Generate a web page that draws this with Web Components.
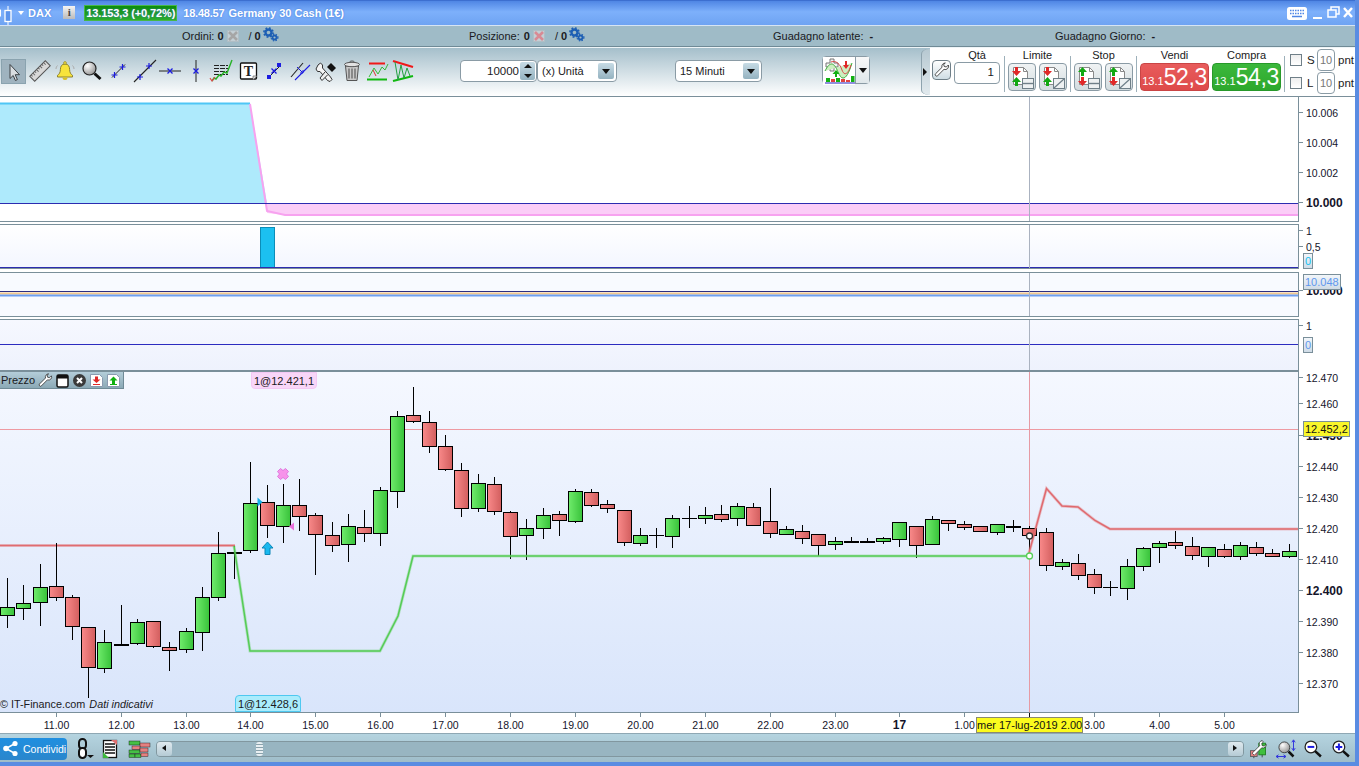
<!DOCTYPE html>
<html lang="it">
<head>
<meta charset="utf-8">
<title>DAX</title>
<style>
  html, body { margin: 0; padding: 0; height: 100%; overflow: hidden; background: #fff; }
  body { font: 11px "Liberation Sans", Arial, sans-serif; color: #1a1a22; }
</style>
</head>
<body>
<trade-window>
  <title-bar></title-bar>
  <info-bar>
    <info-stat label="Ordini:" count="0"></info-stat>
    <info-stat label="Posizione:" count="0" tone="red"></info-stat>
    <gain-stat label="Guadagno latente:"></gain-stat>
    <gain-stat label="Guadagno Giorno:"></gain-stat>
  </info-bar>
  <tool-bar></tool-bar>
  <chart-panel height="125" ticks='[["10.006",113],["10.004",143],["10.002",173],["10.000",203,1]]' plot="trend"></chart-panel>
  <chart-panel height="45" gap="2" ticks='[["1",231],["0,5",247]]' plot="signal">
    <price-tag slot="tags" y="261" tone="cyan">0</price-tag>
  </chart-panel>
  <chart-panel height="45" gap="3" ticks='[["10.000",291,1]]' plot="flat">
    <price-tag slot="tags" y="282" tone="blue">10.048</price-tag>
  </chart-panel>
  <chart-panel height="53" gap="2" ticks='[["1",326]]' plot="zero" open-bottom>
    <price-tag slot="tags" y="344.5" tone="blue">0</price-tag>
  </chart-panel>
  <chart-panel height="341" plot="price" ticks='[["12.470",378],["12.460",404],["12.450",436,1],["12.440",467],["12.430",498],["12.420",529],["12.410",560],["12.400",591,1],["12.390",622],["12.380",653],["12.370",684]]'>
    <price-tag slot="tags" y="429" tone="yellow">12.452,2</price-tag>
    <legend-bar slot="over">Prezzo</legend-bar>
    <order-flag slot="over" tone="pink" x="251" y="372">1@12.421,1</order-flag>
    <order-flag slot="over" tone="cyan" x="235" y="695">1@12.428,6</order-flag>
    <copy-note slot="over"></copy-note>
  </chart-panel>
  <time-axis></time-axis>
  <bottom-bar></bottom-bar>
</trade-window>

<script>
const GEARS = (c) => `<circle cx="5.5" cy="5.5" r="3" fill="none" stroke="${c}" stroke-width="2.4"/><circle cx="5.5" cy="5.5" r="4.6" fill="none" stroke="${c}" stroke-width="1.6" stroke-dasharray="1.8 1.8"/><circle cx="11.5" cy="10.5" r="2" fill="none" stroke="${c}" stroke-width="1.8"/><circle cx="11.5" cy="10.5" r="3.4" fill="none" stroke="${c}" stroke-width="1.2" stroke-dasharray="1.4 1.4"/>`;
const PLUS = (x, y) => `<path d="M${x - 3} ${y}h6M${x} ${y - 3}v6" stroke="#1c1ce0" stroke-width="1.2" fill="none"/>`;
const CROSS = (x, y) => `<path d="M${x - 2.5} ${y - 2.5}l5 5M${x + 2.5} ${y - 2.5}l-5 5" stroke="#1c1ce0" stroke-width="1.3" fill="none"/>`;
const LENS = (id) => `<defs><radialGradient id="${id}" cx=".35" cy=".3" r=".8"><stop offset="0" stop-color="#fff"/><stop offset="1" stop-color="#8d8d8d"/></radialGradient></defs>`;

// every icon is drawn on a 24x24 box, one unit is one pixel
const ICONS = {
  arrow: `<path d="M9 4.5v14l3.2-3 2.2 5 2-.9-2.2-4.9h4.3z" fill="#d9dde0" stroke="#3c4044"/>`,
  ruler: `<g transform="rotate(-45 12 12)"><rect x="1" y="8.500" width="22" height="7" fill="#d8d8d8" stroke="#555"/><path d="M3 8.500v2M5.500 8.500v3M8 8.500v2M10.500 8.500v3M13 8.500v2M15.500 8.500v3M18 8.500v2M20.500 8.500v3" stroke="#666"/></g>`,
  bell: `<path d="M12 5c-3.4 0-4.6 2.600-4.600 5.500 0 3.200-1.400 4.800-2.900 5.800v1.700h15v-1.700c-1.500-1-2.900-2.600-2.900-5.800C16.600 7.600 15.400 5 12 5z" fill="#f7e33c" stroke="#8c8230"/><circle cx="12" cy="4" r="1.400" fill="#f7e33c" stroke="#8c8230" stroke-width=".7"/><path d="M9.500 18.500a2.500 2.500 0 0 0 5 0z" fill="#d8c020"/><path d="M4.500 6.500c-1 1-1.500 2.200-1.500 3.500M19.500 6.500c1 1 1.500 2.200 1.500 3.500" stroke="#aaa" fill="none"/>`,
  zoom: `${LENS('zg')}<circle cx="9.500" cy="9.500" r="6.500" fill="url(#zg)" stroke="#222" stroke-width="1.200"/><path d="M14.500 14.500l6 5.500" stroke="#111" stroke-width="3"/>`,
  seg: `<path d="M6 18.500 19 5.500" stroke="#222"/>${PLUS(8.500, 16)}${PLUS(16.500, 8)}`,
  line: `<path d="M1 23 23 1" stroke="#222" stroke-width="1.100"/>${PLUS(7, 18)}${PLUS(16, 7)}`,
  hline: `<path d="M1 12h22" stroke="#222"/>${CROSS(12, 12)}`,
  vline: `<path d="M12 1v22" stroke="#222"/>${CROSS(12, 12)}`,
  fib: `<path d="M5 6.500h14M5 9.500h14M5 12.500h14M5 15.500h14" stroke="#222" stroke-dasharray="5 1"/><path d="M3 22l2-3 2 1 3-4 2 1 3-4 3 1 5-13" fill="none" stroke="#27b327" stroke-width="1.400"/><path d="M1 19l2 3 3-4" fill="none" stroke="#d84a4a" stroke-width="1.200"/>`,
  text: `<rect x="4.500" y="4" width="16" height="16" rx="1" fill="#fff" stroke="#111" stroke-width="1.300"/><text x="12.500" y="17" text-anchor="middle" font-family="Liberation Serif" font-weight="700" font-size="14" fill="#222">T</text><path d="M17 17h4l-4 4z" fill="#ddd" stroke="#555" stroke-width=".6"/>`,
  ends: `<path d="M8 18 19 7" stroke="#222"/><rect x="6" y="16" width="4" height="4" fill="#1c1ce0"/><rect x="16" y="4" width="4" height="4" fill="#1c1ce0"/>${CROSS(13, 12)}`,
  channel: `<path d="M2 18 14 4" stroke="#222" stroke-width="1.100"/><path d="M6 21 21 6" stroke="#1c1ce0" stroke-width="1.100"/><path d="M8 8l6 6M11 14h3v-3" stroke="#1c1ce0" fill="none"/>`,
  tools: `<path d="M4 6l2.500-2 2 2v3l8 9 1.500 2.500-2 2-2.500-1L6 12.500H3.500L2 10z" fill="#f5f5f5" stroke="#333"/><path d="M11 13l-5 6 2 2.500 6-6" fill="#eee" stroke="#333"/><path d="M13 8l4-4 5 5-4 4z" fill="#111"/>`,
  trash: `<path d="M5.500 7h13l-1.500 14.500h-10z" fill="#c9c9c9" stroke="#555"/><path d="M9 9.500v10M12 9.500v10M15 9.500v10" stroke="#666" stroke-width="1.300"/><ellipse cx="12" cy="5.500" rx="7.500" ry="2.200" fill="#e2e2e2" stroke="#555"/><path d="M9.500 3.500c0-2 5-2 5 0" fill="none" stroke="#555"/>`,
  range: `<path d="M3 4.500h16" stroke="#f01818" stroke-width="2"/><path d="M1 20.500h20" stroke="#10b810" stroke-width="2"/><path d="M3 18l5-9 4 6 4-7 3 3 3-6" fill="none" stroke="#38b838"/><path d="M7 11l3 6" stroke="#e03030"/>`,
  wedge: `<path d="M1 2l20 6" stroke="#f01818" stroke-width="2"/><path d="M1 22l20-5" stroke="#10b810" stroke-width="2"/><path d="M3 3l3 18 3-15 3 13 3-10 3 8" fill="none" stroke="#20a040"/>`,
  wrench: `<path d="M17 1.500a5 5 0 0 0-5 6.500L2.500 17.500a2.100 2.100 0 0 0 3 3L15 11a5 5 0 0 0 6.500-6.500l-3 3-3.200-.8-.8-3.200z" fill="#fff" stroke="#333" stroke-width="1.300"/>`,
  win: `<rect x="1" y="1" width="11" height="12" rx="1.500" fill="#fff" stroke="#111" stroke-width="1.500"/><rect x="1" y="1" width="11" height="3.500" fill="#111"/>`,
  shut: `<circle cx="6.500" cy="6.500" r="6.500" fill="#3a3a3a"/><path d="M4 4l5 5M9 4l-5 5" stroke="#fff" stroke-width="2"/>`,
  docdown: `<path d="M.5.500h9l3 3v9H.5z" fill="#fff" stroke="#8a9ab0"/><path d="M5 2.500h3v3h2.500L6.500 9l-4-3.500H5z" fill="#e02828"/><path d="M3 10.500h7" stroke="#e02828"/>`,
  docup: `<path d="M.5.500h9l3 3v9H.5z" fill="#fff" stroke="#8a9ab0"/><path d="M2.500 6.500l4-4 4 4z" fill="#12b012"/><rect x="5" y="6" width="3" height="4" fill="#12b012"/><path d="M3 10.500h7" stroke="#12b012"/>`,
  share: `<path d="M13 3.500 4 8.500l9 5" fill="none" stroke="#fff" stroke-width="1.500"/><circle cx="13" cy="3.500" r="2.600" fill="#fff"/><circle cx="4" cy="8.500" r="2.800" fill="#fff"/><circle cx="13" cy="13.500" r="2.600" fill="#fff"/>`,
  chain: `<rect x="7" y="2" width="7" height="10" rx="3.400" fill="none" stroke="#111" stroke-width="2"/><rect x="7" y="11" width="7" height="10" rx="3.400" fill="#fff" stroke="#111" stroke-width="2"/><path d="M15 18h7l-3.500 3z" fill="#111"/>`,
  sheet: `<rect x="5.500" y="3.500" width="13" height="17" fill="#fff" stroke="#111" stroke-width="1.300"/><path d="M7 7h10M7 10h10M7 13h10M7 16h10" stroke="#111" stroke-width="1.300"/><path d="M13 3h6v5z" fill="#e07070"/><path d="M5 21v-6l6 6z" fill="#3cb83c"/>`,
  blocks: `<g stroke="#111" stroke-width=".4"><rect x="3" y="4" width="11" height="4" fill="#45c045"/><rect x="14" y="6" width="10" height="4" fill="#e58080"/><rect x="6" y="9" width="8" height="3.500" fill="#e58080"/><rect x="3" y="13" width="11" height="3.500" fill="#45c045"/><rect x="14" y="11" width="8" height="4" fill="#e58080"/><rect x="3" y="17" width="6" height="3.500" fill="#45c045"/><rect x="9" y="17" width="6" height="3.500" fill="#45c045"/><rect x="15" y="16" width="7" height="3.500" fill="#e58080"/></g>`,
  setup: `<path d="M7 15v8M17 2v20" stroke="#333"/><rect x="3" y="14" width="8" height="7" fill="#e58080" stroke="#555"/><rect x="13" y="5" width="8" height="14" fill="#3fc03f" stroke="#1b7a1b"/><path d="M17 2a4 4 0 0 0-3 6L5 17l2.500 2.500 9-9a4 4 0 0 0 5.500-4l-2.500 2-2.500-.5-.5-2.500 2-2z" fill="#fff" stroke="#222" stroke-width=".8"/>`,
  fit: `${LENS('fg')}<circle cx="10" cy="10" r="6.500" fill="url(#fg)" stroke="#333"/><path d="M15 15l6 6" stroke="#111" stroke-width="3"/><path d="M21 2v11M19 4l2-3 2 3M19 11l2 3 2-3" stroke="#1c1ce0" fill="none"/><path d="M1 21h10M3 19l-3 2 3 2M9 19l3 2-3 2" stroke="#1c1ce0" fill="none"/>`,
  minus: `<circle cx="9.500" cy="9.500" r="7" fill="#fff" stroke="#222" stroke-width="1.500"/><path d="M5.500 9.500h8" stroke="#1c1ce0" stroke-width="2.400"/><path d="M14.500 14.500l7 6.500" stroke="#111" stroke-width="3"/>`,
  plus: `<circle cx="9.500" cy="9.500" r="7" fill="#fff" stroke="#222" stroke-width="1.500"/><path d="M5.500 9.500h8M9.500 5.500v8" stroke="#1c1ce0" stroke-width="2.400"/><path d="M14.500 14.500l7 6.500" stroke="#111" stroke-width="3"/>`,
  keyboard: `<rect x="0" y="4" width="20" height="13" rx="2.500" fill="#fff"/><path d="M3 7.500h14M3 10.500h14" stroke="#4f86e6" stroke-width="1.500" stroke-dasharray="1.500 1"/><path d="M5 13.500h10" stroke="#4f86e6" stroke-width="1.500"/>`,
  candle: `<rect x="-4" y="4.500" width="5" height="7" fill="#fff"/><path d="M8 1v19" stroke="#fff"/><rect x="5" y="5.500" width="6" height="11" fill="#5d94ec" stroke="#fff" stroke-width="1.300"/>`,
  chart: `<rect x="0" y="0" width="32" height="28" fill="#fff"/><path d="M7 2v4H3v4h4v4h4v-4h4V6h-4V2z" fill="#f2f2f2" stroke="#777"/><path d="M2 14c5-10 9-9 13 1s9 8 14-9" fill="#cdeec0" stroke="#3cb03c"/><path d="M8 5c5-2 9 2 11 8s6 5 9-5" fill="none" stroke="#d84a4a"/><path d="M12 20v-3H9.500l3.500-4 3.500 4H14v3z" fill="#12b012"/><path d="M24 4v4h2l-3 4-3-4h2V4z" fill="#e02828"/><g fill="#12b012"><rect x="3" y="21" width="4" height="4"/><rect x="13" y="21" width="4" height="4"/><rect x="28" y="19" width="3.500" height="6"/></g><g fill="#e04040"><rect x="8" y="22" width="4" height="3"/><rect x="18" y="22" width="4" height="3"/><rect x="23" y="23" width="4" height="2"/></g><path d="M2 26h30" stroke="#2222c0"/>`
};

class TrIcon extends HTMLElement {
  connectedCallback() {
    const size = this.getAttribute('size') || 24;
    const box = this.getAttribute('box') || 24;
    this.attachShadow({ mode: 'open' });
    this.shadowRoot.innerHTML = `
      <style>:host { display: block; flex: none; width: ${size}px; height: ${size}px; } svg { display: block; overflow: visible; }</style>
      <svg width="${size}" height="${size}" viewBox="0 0 ${box} ${box}">${ICONS[this.getAttribute('name')]}</svg>`;
  }
}
customElements.define('tr-icon', TrIcon);

class TradeWindow extends HTMLElement {
  constructor() {
    super();
    this.attachShadow({ mode: 'open' });
    this.shadowRoot.innerHTML = `
      <style>
        :host { display: block; width: 1359px; height: 766px; box-sizing: border-box; background: #fff;
                border-right: 4px solid #5a8ce2; border-bottom: 4px solid #5a8ce2; overflow: hidden; }
      </style>
      <slot></slot>`;
  }
}
customElements.define('trade-window', TradeWindow);

class TitleBar extends HTMLElement {
  constructor() {
    super();
    this.attachShadow({ mode: 'open' });
    this.shadowRoot.innerHTML = `
      <style>
        :host { display: flex; align-items: center; height: 25px; box-sizing: border-box; padding: 0 2px 1px 0;
                border-top: 1px solid #3c6fd0;
                background: linear-gradient(#4f86e4, #7db0fb 45%, #6ea3f2);
                color: #fff; font-weight: 700; font-size: 11px; white-space: nowrap; text-shadow: 0 0 2px #3f78d8; }
        .drop { width: 0; height: 0; border: 3.5px solid transparent; border-top: 4px solid #fff; border-bottom: 0; margin: 1px 4px 0 2px; }
        .info { width: 12px; height: 13px; margin-left: 12px; background: linear-gradient(#f4f4f4, #bbb); color: #444;
                font: 700 11px/13px "Liberation Serif", serif; text-align: center; text-shadow: none; }
        .quote { margin-left: 9px; height: 16px; width: 93px; flex: none; box-sizing: border-box; line-height: 15px; text-align: center;
                 background: linear-gradient(#0c8c0c, #2cad2c); border: 1px solid #46b846; letter-spacing: -.1px; }
        .time { margin-left: 6px; letter-spacing: -.2px; }
        .name { margin-left: 4px; }
        .space { flex: 1; }
        .cap { margin-right: 6px; }
        .ctl { display: block; overflow: visible; flex: none; }
      </style>
      <tr-icon name="candle" size="16" box="16"></tr-icon>
      <span class="drop"></span><span>DAX</span>
      <span class="info">i</span>
      <span class="quote">13.153,3 (+0,72%)</span>
      <span class="time">18.48.57</span>
      <span class="name">Germany 30 Cash (1€)</span>
      <span class="space"></span>
      <tr-icon class="cap" name="keyboard" size="20" box="20"></tr-icon>
      <svg class="ctl" width="40" height="14" viewBox="0 0 40 14">
        <path d="M0 12h9" stroke="#fff" stroke-width="2"/>
        <path d="M15 4h8v7h-8zM18 4V1h8v7h-3" fill="none" stroke="#fff" stroke-width="1.500"/>
        <path d="M31 2l8 9M39 2l-8 9" stroke="#fff" stroke-width="2.400"/>
      </svg>`;
  }
}
customElements.define('title-bar', TitleBar);

class InfoBar extends HTMLElement {
  constructor() {
    super();
    this.attachShadow({ mode: 'open' });
    this.shadowRoot.innerHTML = `
      <style>
        :host { display: grid; grid-template-columns: 287px 304px 282px 1fr; align-items: center; height: 22px;
                box-sizing: border-box; padding-left: 182px; background: #9fbbc7;
                border-top: 1px solid #d6e4f4; border-bottom: 1px solid #6f8a96; }
      </style>
      <slot></slot>`;
  }
}
customElements.define('info-bar', InfoBar);

class InfoStat extends HTMLElement {
  connectedCallback() {
    const n = this.getAttribute('count');
    const red = this.getAttribute('tone') === 'red';
    this.attachShadow({ mode: 'open' });
    this.shadowRoot.innerHTML = `
      <style>
        :host { display: flex; align-items: center; height: 18px; white-space: nowrap; }
        b { font-weight: 700; }
        .n { margin-left: ${red ? 4 : 3}px; }
        .x { margin-left: 3px; display: block; }
        .s { margin-left: 10px; }
        .m { margin-left: 3px; }
        svg.g { display: block; margin: -5px 0 0 2px; overflow: visible; }
      </style>
      <span>${this.getAttribute('label')}</span><b class="n">${n}</b>
      <svg class="x" width="12" height="12" viewBox="0 0 12 12">
        <rect x=".5" y=".5" width="11" height="11" fill="#c3cfd5" stroke="#b0bec5"/>
        <path d="M2 2l8 8M10 2l-8 8" stroke="${red ? '#d88a94' : '#a6a6a6'}" stroke-width="2.600"/>
      </svg>
      <span class="s">/</span><b class="m">${n}</b>
      <svg class="g" width="15" height="14" viewBox="0 0 15 14">${GEARS('#1d5fb4')}</svg>`;
  }
}
customElements.define('info-stat', InfoStat);

class GainStat extends HTMLElement {
  connectedCallback() {
    this.attachShadow({ mode: 'open' });
    this.shadowRoot.innerHTML = `
      <style>:host { display: block; white-space: nowrap; } b { margin-left: 3px; }</style>
      ${this.getAttribute('label')} <b>-</b>`;
  }
}
customElements.define('gain-stat', GainStat);

class ComboBox extends HTMLElement {
  constructor() {
    super();
    this.attachShadow({ mode: 'open' });
    this.shadowRoot.innerHTML = `
      <style>
        :host { display: flex; align-items: center; box-sizing: border-box; height: 22px; padding: 0 2px 0 4px; flex: none;
                background: #fff; border: 1px solid #8a9ba5; border-radius: 4px; }
        .t { flex: 1; font-size: 11px; }
        .b { width: 16px; height: 16px; border-radius: 2px; background: linear-gradient(#c7dbe5, #94b2c0); position: relative; }
        .b::after { content: ""; position: absolute; left: 4px; top: 6px; border: 4px solid transparent; border-top: 5px solid #111; border-bottom: 0; }
      </style>
      <span class="t"><slot></slot></span><span class="b"></span>`;
  }
}
customElements.define('combo-box', ComboBox);

class SpinBox extends HTMLElement {
  constructor() {
    super();
    this.attachShadow({ mode: 'open' });
    this.shadowRoot.innerHTML = `
      <style>
        :host { display: flex; align-items: center; box-sizing: border-box; height: 22px; width: 77px; flex: none; padding-right: 1px;
                background: #fff; border: 1px solid #8a9ba5; border-radius: 4px; }
        .t { flex: 1; text-align: right; font-size: 11.500px; padding-right: 1px; }
        .s { width: 15px; height: 18px; background: linear-gradient(#c7dbe5, #94b2c0); position: relative; border-radius: 2px; }
        .s::before, .s::after { content: ""; position: absolute; left: 3.500px; border: 4px solid transparent; }
        .s::before { top: 2px; border-bottom: 4px solid #111; border-top: 0; }
        .s::after { bottom: 2px; border-top: 4px solid #111; border-bottom: 0; }
      </style>
      <span class="t"><slot></slot></span><span class="s"></span>`;
  }
}
customElements.define('spin-box', SpinBox);

class ToolBar extends HTMLElement {
  constructor() {
    super();
    const tools = [['ruler', 2], ['bell', 1], ['zoom', 3], ['seg', 2], ['line', 3], ['hline', 1], ['vline', 2], ['fib', 1], ['text', 3], ['ends', 1], ['channel', 4], ['tools', 1], ['trash', 2], ['range', 2], ['wedge', 2]];
    this.attachShadow({ mode: 'open' });
    this.shadowRoot.innerHTML = `
      <style>
        :host { display: flex; height: 50px; box-sizing: border-box; position: relative;
                border-top: 1px solid #eef4f7; border-bottom: 1px solid #7a8f9a;
                background: linear-gradient(#a5bfcb, #fff); }
        .left { display: flex; align-items: center; flex: none; width: 921px; padding: 0 0 2px 1px; box-sizing: border-box; }
        .sel { width: 25px; height: 25px; box-sizing: border-box; flex: none; background: #9fb3bf; border: 1px solid #8aa3af; }
        .sel tr-icon { margin: 0 0 0 -1px; }
        .tools { display: flex; align-items: center; flex: none; }
        .chart { display: flex; flex: none; margin: -3px 0 0 60px; height: 28px; box-sizing: border-box; background: #fff;
                 border: 1px solid #8a9ba5; border-radius: 4px; }
        .chart span { width: 13px; border-left: 1px solid #8a9ba5; position: relative; background: linear-gradient(#f8f8f8, #dfe7ea); }
        .chart span::after { content: ""; position: absolute; left: 2.500px; top: 11px; border: 4px solid transparent; border-top: 5px solid #111; border-bottom: 0; }
        .handle { width: 9px; flex: none; box-sizing: border-box; position: relative; margin: 1px 0;
                  background: linear-gradient(#b6c8d1, #e2eaee); border-left: 1px solid #8ea3ae;
                  border-radius: 8px 0 0 8px / 5px 0 0 5px; }
        .handle::after { content: ""; position: absolute; left: 1px; top: 19px; border: 4px solid transparent; border-left: 4px solid #111; border-right: 0; }
        .right { display: flex; flex: 1; background: #fff; box-sizing: border-box; padding-left: 2px; }
        .wrench { width: 19px; height: 20px; box-sizing: border-box; margin: 12px 3px 0 0; flex: none; border: 1px solid #6f7f88; border-radius: 4px;
                  background: linear-gradient(#fff, #cfdde4); }
        .wrench tr-icon { margin: 1px; }
        .sep { width: 1px; height: 36px; background: #9db0ba; margin: 8px 3px 0; flex: none; }
        .sep.first { margin-left: 4px; }
        .qty { width: 46px; height: 22px; box-sizing: border-box; margin-top: -1px; text-align: right; padding: 3px 5px 0 0; font-size: 11.500px; border: 1px solid #8a9ba5; border-radius: 4px; background: #fff; }
        .pair { display: flex; gap: 3px; }
        .safe { display: grid; grid-template-columns: 13px 14px 18px auto; align-items: center; margin-left: 2px; row-gap: 1px; align-content: start; padding-top: 1px; font-size: 11.500px; }
        .safe i { display: block; width: 12px; height: 12px; box-sizing: border-box; border: 1px solid #6f7f88; background: linear-gradient(#eee, #fff); }
        .safe u { display: block; text-decoration: none; width: 18px; height: 22px; line-height: 20px; box-sizing: border-box; text-align: center; font-size: 11px; color: #777; border: 1px solid #8a9ba5; border-radius: 4px; }
        .safe span { padding-left: 3px; }
        .safe span.k { padding-left: 4px; }
      </style>
      <div class="left">
        <div class="sel"><tr-icon name="arrow"></tr-icon></div>
        <div class="tools">${tools.map(t => `<tr-icon name="${t[0]}" style="margin-left:${t[1]}px"></tr-icon>`).join('')}</div>
        <spin-box style="margin-left:44px">10000</spin-box>
        <combo-box style="width:80px">(x) Unità</combo-box>
        <combo-box style="width:87px;margin-left:58px">15 Minuti</combo-box>
        <div class="chart"><tr-icon name="chart" size="32" box="32"></tr-icon><span></span></div>
      </div>
      <span class="handle"></span>
      <div class="right">
        <div class="wrench"><tr-icon name="wrench" size="16" box="24"></tr-icon></div>
        <trade-group label="Qtà"><div class="qty">1</div></trade-group>
        <span class="sep first"></span>
        <trade-group label="Limite"><div class="pair"><order-button first="down" kind="lines"></order-button><order-button first="down" kind="slash"></order-button></div></trade-group>
        <span class="sep"></span>
        <trade-group label="Stop"><div class="pair"><order-button first="up" kind="lines"></order-button><order-button first="up" kind="slash"></order-button></div></trade-group>
        <span class="sep"></span>
        <trade-group label="Vendi"><quote-button tone="red" head="13.1">52,3</quote-button></trade-group>
        <trade-group label="Compra" style="margin-left:3px"><quote-button tone="green" head="13.1">54,3</quote-button></trade-group>
        <span class="sep"></span>
        <div class="safe">
          <i></i><span class="k">S</span><u>10</u><span>pnt</span>
          <i></i><span class="k">L</span><u>10</u><span>pnt</span>
        </div>
      </div>`;
  }
}
customElements.define('tool-bar', ToolBar);

class TradeGroup extends HTMLElement {
  connectedCallback() {
    this.attachShadow({ mode: 'open' });
    this.shadowRoot.innerHTML = `
      <style>
        :host { display: flex; flex-direction: column; align-items: center; flex: none; }
        .l { height: 15px; line-height: 14px; font-size: 11px; }
      </style>
      <div class="l">${this.getAttribute('label')}</div><slot></slot>`;
  }
}
customElements.define('trade-group', TradeGroup);

class OrderButton extends HTMLElement {
  connectedCallback() {
    const downFirst = this.getAttribute('first') === 'down';
    const down = (y) => `<path d="M6 ${y}h3v4h3l-4.500 5-4.500-5h3z" fill="#e02828"/>`;
    const up = (y) => `<path d="M7.500 ${y}l4.500 5H9v4H6v-4H3z" fill="#12a812"/>`;
    const sub = this.getAttribute('kind') === 'lines'
      ? `<rect x="13.500" y="14.500" width="11" height="10" fill="#eef1f2" stroke="#6f7f88"/><path d="M13.500 19.500h11" stroke="#6f7f88" stroke-width="1.400"/>`
      : `<rect x="13.500" y="14.500" width="11" height="10" fill="#eef1f2" stroke="#6f7f88"/><path d="M14 24 24 15" stroke="#6f7f88" stroke-width="1.200"/>`;
    this.attachShadow({ mode: 'open' });
    this.shadowRoot.innerHTML = `
      <style>
        :host { display: block; width: 28px; height: 28px; box-sizing: border-box; border: 1px solid #8a9ba5; border-radius: 4px;
                background: linear-gradient(#f0f3f4, #d3dcdf); }
        svg { display: block; }
      </style>
      <svg width="26" height="26" viewBox="0 0 26 26">
        <path d="M4.500 3.500h10l4 4v13h-14z" fill="#fff" stroke="#8a8a8a"/><path d="M14.500 3.500v4h4" fill="none" stroke="#8a8a8a"/>
        ${downFirst ? down(3) + up(13) : up(3) + down(13)}
        ${sub}
      </svg>`;
  }
}
customElements.define('order-button', OrderButton);

class QuoteButton extends HTMLElement {
  connectedCallback() {
    const red = this.getAttribute('tone') === 'red';
    this.attachShadow({ mode: 'open' });
    this.shadowRoot.innerHTML = `
      <style>
        :host { display: flex; align-items: baseline; justify-content: center; width: 69px; height: 28px; box-sizing: border-box;
                border-radius: 4px; color: #fff; line-height: 26px; white-space: nowrap;
                border: 1px solid ${red ? '#c94545' : '#27992a'};
                background: ${red ? 'linear-gradient(#e85c5c, #de4a4a)' : 'linear-gradient(#3cb83c, #2da82d)'}; }
        small { font-size: 11px; }
        span { font-size: 23px; letter-spacing: -.4px; }
      </style>
      <small>${this.getAttribute('head')}</small><span><slot></slot></span>`;
  }
}
customElements.define('quote-button', QuoteButton);

const CANDLES = [
  [7,578,627,607,615,'g'],[23,585,619,603,608,'g'],[40,564,625,587,602,'g'],[56,543,600,586,597,'r'],[72,595,639,597,626,'r'],
  [88,627,697,627,667,'r'],[104,630,672,642,668,'g'],[121,605,645,644,644,'k'],[137,619,644,622,643,'g'],[153,621,647,621,646,'r'],
  [169,642,670,647,650,'r'],[186,628,652,631,649,'g'],[202,587,650,597,632,'g'],[218,532,600,553,597,'g'],[234,546,578,552,552,'k'],
  [250,462,552,503,550,'g'],[267,485,537,502,525,'r'],[283,484,542,505,526,'g'],[299,479,530,505,516,'r'],[315,513,574,515,534,'r'],
  [332,522,551,535,545,'r'],[348,514,561,526,544,'g'],[364,510,541,527,533,'r'],[380,487,545,490,533,'g'],[397,411,507,416,491,'g'],
  [413,387,422,415,421,'r'],[429,411,452,422,446,'r'],[445,435,470,446,469,'r'],[461,463,516,470,508,'r'],[478,474,511,483,508,'g'],
  [494,477,514,484,511,'r'],[510,511,558,512,536,'r'],[526,519,559,528,535,'g'],[543,508,538,515,528,'g'],[559,511,535,514,520,'r'],
  [575,489,522,491,521,'g'],[591,489,506,492,505,'r'],[607,500,512,504,508,'r'],[624,510,545,510,542,'r'],[640,528,545,535,543,'g'],
  [656,528,547,535,535,'n'],[672,515,547,518,536,'g'],[689,506,527,518,518,'n'],[705,507,523,515,518,'g'],[721,505,521,514,519,'r'],
  [737,503,525,506,518,'g'],[753,503,525,507,525,'r'],[770,488,537,521,533,'r'],[786,526,534,529,534,'g'],[802,525,543,531,538,'r'],
  [818,534,555,534,545,'r'],[835,537,549,541,544,'g'],[851,537,541,541,541,'k'],[867,538,541,541,541,'k'],[883,537,543,538,541,'g'],
  [899,522,546,522,539,'g'],[916,526,557,526,545,'r'],[932,516,544,519,544,'g'],[948,520,530,520,523,'r'],[964,521,529,524,527,'r'],
  [980,526,531,526,531,'r'],[997,524,534,524,532,'g'],[1013,520,531,526,526,'k'],[1029,526,553,528,535,'r'],[1046,528,570,532,565,'r'],
  [1062,559,569,562,566,'g'],[1078,554,579,563,575,'r'],[1094,569,593,574,587,'r'],[1110,581,595,587,587,'n'],[1127,559,599,566,588,'g'],
  [1143,547,570,548,566,'g'],[1159,541,562,543,547,'g'],[1175,531,548,542,545,'r'],[1192,537,559,546,555,'r'],[1208,547,566,547,556,'g'],
  [1224,544,557,549,556,'r'],[1240,542,559,545,556,'g'],[1256,542,555,547,553,'r'],[1272,549,556,553,556,'r'],[1289,544,557,551,556,'g']
];

function candlesSvg() {
  return CANDLES.map(([x, wt, wb, bt, bb, c]) => {
    const wick = `<path d="M${x + .5} ${wt}V${wb + 1}" stroke="#000"/>`;
    if (c === 'k') return wick + `<rect x="${x - 7}" y="${bt}" width="15" height="2" fill="#000"/>`;
    if (c === 'n') return wick + `<rect x="${x - 7}" y="${bt}" width="15" height="1" fill="#000"/>`;
    return wick + `<rect x="${x - 6.5}" y="${bt + .5}" width="14" height="${bb - bt}" fill="url(#${c})" stroke="#000"/>`;
  }).join('');
}

const VLINE = (top, bot, c) => `<path d="M1029.500 ${top}V${bot}" stroke="${c}" shape-rendering="crispEdges"/>`;
const HALO = (d, c) => `<path d="${d}" stroke="${c}" stroke-width="3" opacity=".35" fill="none"/><path d="${d}" stroke="${c}" stroke-width="1.500" fill="none"/>`;

// each plot uses the page's y values through its viewBox
const PLOTS = {
  trend: () => `
    <path d="M0 103H250L267 203H0z" fill="#aeeafc"/>
    <path d="M267 203h1031v12H285l-18-2z" fill="#fbcdf7"/>
    <path d="M0 103.500H250" stroke="#4fc6f5" stroke-width="2" fill="none"/>
    <path d="M250 104 267 211 285 215H1298" stroke="#f7a2ef" stroke-width="2" fill="none"/>
    <path d="M0 203.500H1298" stroke="#2c2cb0" shape-rendering="crispEdges"/>
    ${VLINE(97, 222, '#aab2c0')}`,
  signal: () => `
    <rect x="260.500" y="227.500" width="14" height="40" fill="#1cc0f0" stroke="#0c8db8"/>
    <path d="M0 267.500H1298" stroke="#2c2cb0" shape-rendering="crispEdges"/>
    ${VLINE(225, 268, '#aab2c0')}`,
  flat: () => `
    <path d="M0 291.500H1298" stroke="#2c2c80" shape-rendering="crispEdges"/>
    <path d="M0 293.500H1298" stroke="#f3c88f" stroke-width="2"/>
    <path d="M0 295.500H1298" stroke="#6f9ff0" stroke-width="2"/>
    ${VLINE(273, 317, '#aab2c0')}`,
  zero: () => `
    <path d="M0 344.500H1298" stroke="#2c2cc0" shape-rendering="crispEdges"/>
    ${VLINE(320, 371, '#aab2c0')}`,
  price: () => `
    <defs>
      <linearGradient id="g"><stop offset="0" stop-color="#70ec6c"/><stop offset="1" stop-color="#38c23a"/></linearGradient>
      <linearGradient id="r"><stop offset="0" stop-color="#f98a8a"/><stop offset="1" stop-color="#d25e5e"/></linearGradient>
    </defs>
    <path d="M0 429.500H1298" stroke="#ee9aa2" shape-rendering="crispEdges"/>
    ${VLINE(372, 712, '#e69aa4')}
    ${HALO('M0 545.500H235', '#e06c70')}
    <g shape-rendering="crispEdges">${candlesSvg()}</g>
    ${HALO('M234 546 250 651H380L398 616 413 556H1029', '#55cc55')}
    ${HALO('M1029 553 1046.500 488.500 1062 506 1078 507 1095 520.500 1110 529H1298', '#e0696e')}
    <circle cx="1029.500" cy="536" r="3" fill="#fff" stroke="#333" stroke-width="1.300"/>
    <circle cx="1029.500" cy="556" r="3" fill="#fff" stroke="#58cf58" stroke-width="1.300"/>
    <path d="M280.500 468.500l2.500 2 2.500-2 3 3-2 2.500 2 2.500-3 3-2.500-2-2.500 2-3-3 2-2.500-2-2.500z" fill="#f793ea" stroke="#d868d8" stroke-width=".8"/>
    <path d="M257.500 497.500l5 4.500-5 4.500z" fill="#12b2ea"/>
    <path d="M294 522.500l-5 4 5 4z" fill="#ea70dc"/>
    <path d="M267.500 542l5.500 6h-3v6.500h-5V548h-3z" fill="#19b8ef" stroke="#0a86b8"/>`
};

class ChartPanel extends HTMLElement {
  connectedCallback() {
    const h = +this.getAttribute('height');
    const gap = +(this.getAttribute('gap') || 0);
    const kind = this.getAttribute('plot');
    const top = { trend: 97, signal: 224, flat: 272, zero: 319, price: 372 }[kind];
    const ticks = JSON.parse(this.getAttribute('ticks'));
    const bg = {
      trend: 'linear-gradient(#fff, #fff)', signal: 'linear-gradient(#fff, #f3f6ff)', flat: '#f8faff',
      zero: 'linear-gradient(#f6f8ff, #eef2fd)', price: 'linear-gradient(#f5f8ff, #d9e5fb)'
    }[kind];
    const axis = ticks.map(([t, y, b]) =>
      `<span class="tick" style="top:${Math.round(y - top) - 1}px"></span><span class="lab${b ? ' b' : ''}" style="top:${y - top - 8}px">${t}</span>`).join('');
    const bottom = this.hasAttribute('open-bottom') ? '2px solid #7a8f9a' : '1px solid #7a8f9a';
    const topLine = kind === 'trend' || kind === 'price' ? '0' : '1px solid #7a8f9a';
    this.attachShadow({ mode: 'open' });
    this.shadowRoot.innerHTML = `
      <style>
        :host { display: flex; height: ${h}px; margin-top: ${gap}px; position: relative; }
        .plot { position: relative; width: 1299px; flex: none; box-sizing: border-box; overflow: hidden;
                background: ${bg}; border-right: 1px solid #7a8f9a; border-bottom: ${bottom}; border-top: ${topLine}; }
        svg { position: absolute; left: 0; top: ${topLine === '0' ? 0 : -1}px; display: block; }
        .axis { position: relative; flex: 1; }
        .tick { position: absolute; left: 0; width: 4px; height: 1px; background: #7a8f9a; }
        .lab { position: absolute; left: 7px; line-height: 16px; font-size: 10.500px; color: #14142a; }
        .lab.b { font-weight: 700; font-size: 12px; }
      </style>
      <div class="plot">
        <svg width="1298" height="${h}" viewBox="0 ${top} 1298 ${h}">${PLOTS[kind]()}</svg>
        <slot name="over"></slot>
      </div>
      <div class="axis">${axis}<slot name="tags"></slot></div>`;
    this.querySelectorAll('price-tag').forEach(t => t.style.setProperty('--tag-top', (t.getAttribute('y') - top) + 'px'));
    this.querySelectorAll('order-flag').forEach(t => {
      t.style.left = t.getAttribute('x') + 'px';
      t.style.top = (t.getAttribute('y') - top) + 'px';
    });
  }
}
customElements.define('chart-panel', ChartPanel);

class PriceTag extends HTMLElement {
  connectedCallback() {
    const t = this.getAttribute('tone');
    const c = { cyan: ['#12c0f0', 'linear-gradient(#f2f6fa, #cfdbe6)'], blue: ['#5f97ee', 'linear-gradient(#f2f6fa, #cfdbe6)'], yellow: ['#111', '#f9f62a'] }[t];
    this.attachShadow({ mode: 'open' });
    this.shadowRoot.innerHTML = `
      <style>
        :host { position: absolute; left: 4px; top: calc(var(--tag-top) - 8px); height: 16px; box-sizing: border-box; padding: 0 1px; min-width: 9px; text-align: center;
                border: 1px solid #7a8f9a; background: ${c[1]}; color: ${c[0]}; font-size: 11px; line-height: 14px; z-index: 2; white-space: nowrap; }
      </style><slot></slot>`;
  }
}
customElements.define('price-tag', PriceTag);

class LegendBar extends HTMLElement {
  constructor() {
    super();
    this.attachShadow({ mode: 'open' });
    this.shadowRoot.innerHTML = `
      <style>
        :host { position: absolute; left: 0; top: 0; z-index: 1; display: flex; align-items: center; width: 124px; height: 17px; box-sizing: border-box; padding-left: 1px;
                background: linear-gradient(#b4cdd9, #8ba9b6); border-right: 1px solid #6f8a96; border-bottom: 1px solid #6f8a96; font-size: 11px; }
        .t { width: 37px; flex: none; }
      </style>
      <span class="t"><slot></slot></span>
      <tr-icon name="wrench" size="15" box="24"></tr-icon>
      <tr-icon name="win" size="13" box="13" style="margin-left:3px"></tr-icon>
      <tr-icon name="shut" size="13" box="13" style="margin-left:4px"></tr-icon>
      <tr-icon name="docdown" size="13" box="13" style="margin-left:4px"></tr-icon>
      <tr-icon name="docup" size="13" box="13" style="margin-left:4px"></tr-icon>`;
  }
}
customElements.define('legend-bar', LegendBar);

class OrderFlag extends HTMLElement {
  connectedCallback() {
    const pink = this.getAttribute('tone') === 'pink';
    this.attachShadow({ mode: 'open' });
    this.shadowRoot.innerHTML = `
      <style>
        :host { position: absolute; width: 66px; height: 17px; box-sizing: border-box; text-align: center; font-size: 11px; line-height: 16px; white-space: nowrap;
                background: ${pink ? '#f8d6f8' : '#aaecfc'};
                border: 1px solid ${pink ? '#f4c8f4' : '#4ec8f0'};
                border-radius: ${pink ? '0 0 4px 4px' : '4px 4px 0 0'}; }
      </style><slot></slot>`;
  }
}
customElements.define('order-flag', OrderFlag);

class CopyNote extends HTMLElement {
  constructor() {
    super();
    this.attachShadow({ mode: 'open' });
    this.shadowRoot.innerHTML = `
      <style>
        :host { position: absolute; left: 0; bottom: 0; line-height: 14px; height: 15px; white-space: nowrap; font-size: 10.800px; }
        i { margin-left: 1px; }
      </style>© IT-Finance.com <i>Dati indicativi</i>`;
  }
}
customElements.define('copy-note', CopyNote);

class TimeAxis extends HTMLElement {
  constructor() {
    super();
    const hours = [['11.00', 56], ['12.00', 121], ['13.00', 186], ['14.00', 250], ['15.00', 315], ['16.00', 380], ['17.00', 445], ['18.00', 510], ['19.00', 575], ['20.00', 640], ['21.00', 705], ['22.00', 770], ['23.00', 835], ['17', 899, 1], ['1.00', 964], ['3.00', 1094], ['4.00', 1159], ['5.00', 1224]];
    this.attachShadow({ mode: 'open' });
    this.shadowRoot.innerHTML = `
      <style>
        :host { display: block; position: relative; height: 20px; background: #fff; }
        .t { position: absolute; top: 0; width: 1px; height: 4px; background: #7a8f9a; }
        .l { position: absolute; top: 5px; transform: translateX(-50%); line-height: 14px; font-size: 10.500px; color: #14142a; }
        .l.b { font-weight: 700; font-size: 12px; }
        .now { position: absolute; left: 976px; top: 4px; width: 107px; height: 16px; box-sizing: border-box; border: 1px solid #8a8a70; background: #fbfb1e;
               text-align: center; line-height: 14px; white-space: nowrap; font-size: 11px; color: #111; }
      </style>
      ${hours.map(h => `<span class="t" style="left:${h[1]}px"></span><span class="l${h[2] ? ' b' : ''}" style="left:${h[1] + .5}px">${h[0]}</span>`).join('')}
      <span class="t" style="left:1029px;background:#111"></span>
      <span class="now">mer 17-lug-2019 2.00</span>`;
  }
}
customElements.define('time-axis', TimeAxis);

class BottomBar extends HTMLElement {
  constructor() {
    super();
    this.attachShadow({ mode: 'open' });
    this.shadowRoot.innerHTML = `
      <style>
        :host { display: flex; align-items: center; height: 29px; box-sizing: border-box; border-top: 1px solid #8fa8b4;
                background: linear-gradient(#b5d4e0, #9fbdc9); padding-top: 1px; }
        .share { display: flex; align-items: center; gap: 4px; width: 67px; height: 22px; box-sizing: border-box; padding-left: 2px; flex: none;
                 background: linear-gradient(#1f8fe0, #2a86cc); border-radius: 0 4px 4px 0; color: #fff; font-size: 10.500px; }
        .scroll { display: flex; justify-content: space-between; align-items: center; width: 1088px; height: 16px; margin-left: 6px; box-sizing: border-box; flex: none; position: relative;
                  background: #98b5c1; border: 1px solid #81979f; border-radius: 4px; }
        .btn { width: 15px; height: 14px; background: linear-gradient(#dfe9ee, #b5cbd5); border-radius: 3px; position: relative; }
        .btn::after { content: ""; position: absolute; top: 3.500px; left: 5px; border: 3.500px solid transparent; }
        .btn.l::after { border-right: 4px solid #111; border-left: 0; }
        .btn.r::after { border-left: 4px solid #111; border-right: 0; }
        .grip { position: absolute; left: 99px; top: 0; width: 7px; height: 14px; border-radius: 3px; background: repeating-linear-gradient(#e8eff2 0 2px, #8aa2ac 2px 3px); }
      </style>
      <div class="share"><tr-icon name="share" size="17" box="17"></tr-icon>Condividi</div>
      <tr-icon name="chain" style="margin-left:5px"></tr-icon>
      <tr-icon name="sheet" style="margin-left:2px"></tr-icon>
      <tr-icon name="blocks" style="margin-left:4px"></tr-icon>
      <div class="scroll"><span class="btn l"></span><span class="grip"></span><span class="btn r"></span></div>
      <tr-icon name="setup" size="20" box="24" style="margin-left:4px"></tr-icon>
      <tr-icon name="fit" size="20" box="24" style="margin-left:8px"></tr-icon>
      <tr-icon name="minus" size="20" box="24" style="margin-left:7px"></tr-icon>
      <tr-icon name="plus" size="20" box="24" style="margin-left:8px"></tr-icon>`;
  }
}
customElements.define('bottom-bar', BottomBar);
</script>
</body>
</html>
